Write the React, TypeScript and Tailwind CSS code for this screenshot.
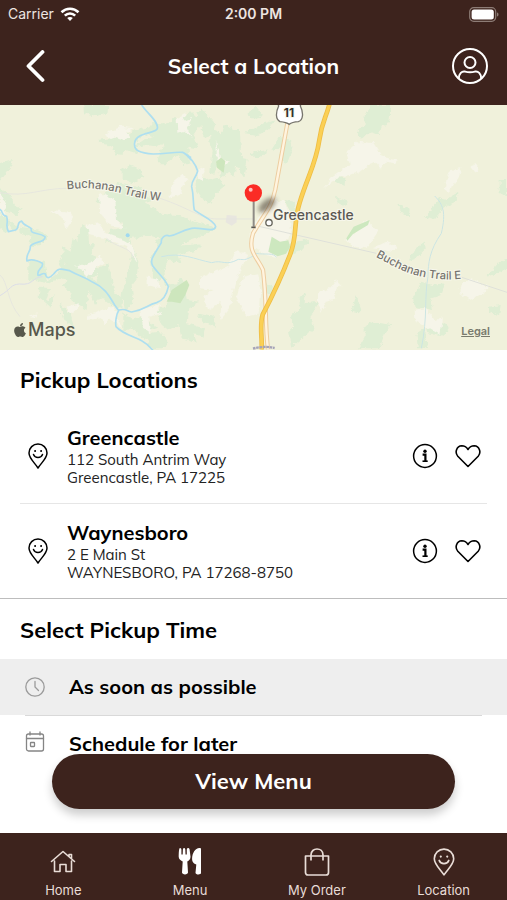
import type { ReactNode } from "react";
import { FaApple } from "react-icons/fa";

const locations = [
  { name: "Greencastle", street: "112 South Antrim Way", city: "Greencastle, PA 17225" },
  { name: "Waynesboro", street: "2 E Main St", city: "WAYNESBORO, PA 17268-8750" },
];

function SmilePin({ className }: { className: string }) {
  return (
    <svg viewBox="0 0 20 26" className={className} fill="none" stroke="currentColor" strokeWidth="1.5" strokeLinecap="round" strokeLinejoin="round" aria-hidden="true">
      <path d="M10 25C7 20 1 15.500 1 10a9 9 0 0 1 18 0c0 5.500-6 10-9 15Z" />
      <path d="M5.500 11.500c1.500 4 7.500 4 9 0" />
      <circle cx="7" cy="8" r=".5" fill="currentColor" strokeWidth="1" />
      <circle cx="13" cy="8" r=".5" fill="currentColor" strokeWidth="1" />
    </svg>
  );
}

function InfoIcon() {
  return (
    <svg viewBox="0 0 26 26" className="size-[26px]" fill="none" stroke="currentColor" aria-hidden="true">
      <circle cx="13" cy="13" r="11.400" strokeWidth="1.500" />
      <circle cx="13" cy="8.300" r="1.700" fill="currentColor" stroke="none" />
      <path d="M10.600 11.700h2.800v6.300" strokeWidth="2.200" />
      <path d="M10.500 18.200h5.200" strokeWidth="1.600" />
    </svg>
  );
}

function HeartIcon() {
  return (
    <svg viewBox="0 0 26 24" className="h-6 w-[26px]" fill="none" stroke="currentColor" strokeWidth="1.600" strokeLinejoin="round" aria-hidden="true">
      <path d="M13 22.500 2.800 12.200C-.5 8.400 1.500 2 6.800 1.800c3 0 4.600 1.200 6.200 3.700 1.600-2.500 3.200-3.700 6.200-3.700 5.300.2 7.300 6.600 4 10.400Z" />
    </svg>
  );
}

function StatusBar() {
  return (
    <div className="grid h-7 grid-cols-3 items-center px-2 font-['Inter','Liberation_Sans',sans-serif] text-sm text-[#eee5e1]">
      <div className="flex items-center gap-1.5">
        <span>Carrier</span>
        <svg viewBox="0 0 20 14" className="h-[14px] w-5" fill="none" stroke="#fff" strokeWidth="2.600" aria-hidden="true">
          <path d="M1.500 5.200c4.800-4.600 12.200-4.600 17 0M4.800 8.600c3-2.900 7.400-2.900 10.400 0" />
          <path d="m10 14-2.800-3c1.600-1.500 4-1.500 5.600 0Z" fill="#fff" stroke="none" />
        </svg>
      </div>
      <span className="text-center font-semibold">2:00 PM</span>
      <svg viewBox="0 0 30 15" className="h-[15px] w-[30px] justify-self-end" aria-hidden="true">
        <rect x=".7" y=".7" width="26" height="13.600" rx="4" fill="none" stroke="#8d7c76" strokeWidth="1.200" />
        <rect x="2.600" y="2.500" width="22.200" height="10" rx="2.500" fill="#fff" />
        <path d="M28 5.500c2 .5 2 3.500 0 4Z" fill="#8d7c76" />
      </svg>
    </div>
  );
}

function Header() {
  return (
    <header className="shrink-0 bg-[#3d231d] text-white">
      <StatusBar />
      <div className="grid h-[77px] grid-cols-[40px_1fr_40px] items-center px-[18px]">
        <button type="button" aria-label="Back" className="flex h-10 items-center pl-1.5">
          <svg viewBox="0 0 22 34" className="h-[34px] w-[22px]" fill="none" stroke="currentColor" strokeWidth="3.800" strokeLinecap="round" strokeLinejoin="round" aria-hidden="true">
            <path d="M18.500 2 4.500 16l14 14" />
          </svg>
        </button>
        <h1 className="text-center text-[21px] font-bold">Select a Location</h1>
        <button type="button" aria-label="Account" className="flex h-10 items-center justify-end">
          <svg viewBox="0 0 38 38" className="size-[38px]" fill="none" stroke="currentColor" strokeWidth="2" aria-hidden="true">
            <circle cx="19" cy="18" r="17" />
            <circle cx="19" cy="14.500" r="5.500" />
            <path d="M7.800 30.500c.2-5 3-7.600 6.300-6.900 3.800 1 6 1 9.800 0 3.300-.7 6.100 1.900 6.300 6.900" />
          </svg>
        </button>
      </div>
    </header>
  );
}

function LocationMap() {
  return (
    <div className="relative shrink-0 font-['Inter','Liberation_Sans',sans-serif]">
      <svg viewBox="0 0 507 245" className="block w-full bg-[#f0f1db]" role="img" aria-label="Map of Greencastle">
        <defs>
          <filter id="pinShadow" x="-50%" y="-50%" width="200%" height="200%"><feGaussianBlur stdDeviation="8" /></filter>
          <filter id="terrain" x="-5%" y="-5%" width="110%" height="110%">
            <feTurbulence type="fractalNoise" baseFrequency=".07" numOctaves="3" seed="4" />
            <feDisplacementMap in="SourceGraphic" scale="16" xChannelSelector="R" yChannelSelector="G" />
            <feGaussianBlur stdDeviation="1.600" />
          </filter>
          <path id="trailWest" d="M201 268C260 262 300 266 345 275S420 299 500 303" />
          <path id="trailEast" d="M368 470C420 497 460 525 530 534S600 536 650 536" />
        </defs>

        <g transform="translate(0 -5) scale(.33333)">
          <g fill="#dfeed4" filter="url(#terrain)">
            <path d="M250 15h75l-3 25-30 8-40-8ZM295 120l65-10 50-20 45-12-28 30-22 25 10 28-40-12-25 22-12-34-30-5ZM505 70l20-20 15 15 30-35 20 20 15-25 40 45-5 30-25 15-15-40-20 30 15 40-30-5 5 50-20 5-15-30-25 15-18 20-20-20 20-50-20 10-35-5-40 10 35-25 30-10-25-10 20-30ZM640 90l25 10 10-25 25 15h20l3 80 20 5-10 60-25-40-5 40-15-20-25 20-10-50-10 40-15-10 10-60-10-30ZM590 230l30 10 35-10 20 30-25 20-20 30-20-10-20-30Z" />
            <path d="M365 210l25-14 30 12 10 22-30 20-35-15ZM355 250l65 12 12 30 50 2-45 12 45 35 60 5 45 20 60 15-15 15-60 15-35 5-30-5-20 15-15-15-45-5-20 15-10-25-20 5-10-35-30-5-10-25-40-35ZM0 190l38-10-5 20-33 45ZM0 265l30 20 15 30 20 10-15 20-30-10-20 5ZM0 340l30 20 25 22-10 15-15-25-12 25-18-12ZM245 375l20 10 2 50 15-5-5 35 35 15-30 10 20 25-25 20-10 35-45-50-25-30-10 20-10-30 15-20-5-20 25 15 5-40 15 5 5-25ZM330 390l60-10 20 25-20 10 5 20-50-12-30 5ZM60 380l60 10 22 20-20 25-35 5 5-30-30-10ZM85 480l50 5 5 60 45-35-10-25 60 25 50 30 20 50-20 25-20-45-5 60-45-25-5-30-25-15 20-20-25-5-30 15-65-10ZM120 560l30 5-12 40 28-20-15 35-35-30ZM300 500l25-10 10 45 12 50 20 5-3 35-45-20-35-40ZM400 440l15 45-5 50-15 20 5 55-25 20-10-45 20-75ZM485 410l90-10 60-15-10 15-55 20-30 20 65-10-10 20-60 15 10 25-40-10-30 70-15-15-10-65 25-25-10-20ZM470 500l20 5 10 45 25 5 20-20 10 30 5 35 40 5-35 20-5 45 55 15-5 25-30-10 10 25-45-10-10-40-30 15-25-20-10-40 30-15 15-30ZM180 610l30 30 15 45-35-25ZM370 640l30 20 25-15 20 20 30 15-30 10 10 20-20 10-40-35-25 10ZM440 700l40-5 25 30-15 20h-40ZM635 525l35-15 15 20-35 25ZM590 640l50 10 10 35-40-20Z" />
          </g>
          <g fill="#f6f5e9" filter="url(#terrain)">
            <path d="M318 100l45-20 38 5-20 12 8 15-30 10-8-12-20 8ZM530 55l30-15-10 25 30-12-20 30 15 30-25-20-18 5ZM650 120l10 55 30 10-20 15-20-30ZM508 295l10-50 32-25 12 20-20 25 5 15ZM296 275l50 25 5 60 25 25-40-5-35-40ZM262 375l35-5 20 30 55 20 25 15 15 50-35-45-60-25-50-10ZM228 500l50-15 20-20 15 20-25 20-30 30-5-25ZM200 620l40-10-5 20-25 10ZM265 645l50-15 20-10 20 15-5 20 20 30-45-30-10 20-12-20-40 5ZM420 630l60-15-10 20 20 5-45 10 5 50-20-15ZM150 330l60 5 12 20-25 35-10-40ZM600 530l85-30 25-50 35 15-25 45-20 60-10 50-30 40 5-55-40 25-15-40 30-20-40-5ZM0 275l20 40-8 20 15 25-27-25ZM440 530l30 5 10 30-40-10ZM90 650l20-10-5 15ZM590 230l12-30 15 5-12 35Z" />
          </g>
          <path d="M500 605l15-35 45-30 8 15-12 30-15 25-25-5ZM648 185l15-12 13 10-5 35-20-15Z" fill="#cde6bd" />
          <path d="m680 345 30 2v20l-15 10-18-10Z" fill="#e8e6df" />
          <path d="M0 278c80 15 120-13 200-13M480 295c90 30 120 60 170 62h112M0 525c25 20 20 80 60 125M320 415c30 30 75 25 80 60" fill="none" stroke="#e5e5de" strokeWidth="2.500" />
          <path d="M0 587c35-20 30-33 58-35 45 5 35-20 70-22" fill="none" stroke="#dcdde7" strokeWidth="3" />
          <g fill="none" stroke="#aedff0" strokeWidth="5" strokeLinejoin="round" strokeLinecap="round">
            <path d="M423 10C430 32 478 62 472 86C466 102 408 96 404 128C400 152 420 160 460 162C500 162 520 155 548 157C570 168 588 195 593 213C588 235 574 240 575 260C582 290 578 305 583 330C600 345 645 362 647 380C640 400 600 380 575 385C540 392 530 406 508 408C495 402 482 415 484 428C462 465 448 480 458 497C475 522 495 535 505 560C500 585 488 602 470 608C440 615 435 630 395 636C378 634 380 624 357 630C350 640 345 665 348 680C365 700 400 710 425 722C440 730 448 738 458 750" />
            <path d="M0 328c12 8 0 16 20 21 6 25-5 22 5 46l22-5c14-8 0-22 18-27 6 16 20 13 29 23-5 18 22 10 41 24 2 19-33 13-44 29 2 18-15 22-10 44 13-7 28-3 46 7 5 15-18 16-13 36 9 1 15-10 22-4 5 19 16 9 25 0 15-23 28-13 48-10 35 19 42 17 70 35 48 22 53 56 76 83" />
            <path d="M485 470c60-15 98 8 150 18 35-10 40 12 80-10 20 0 15 5 45-10" strokeWidth="3" stroke="#cae6e7" />
          </g>
          <path d="m548 155 26 15-2 12Z" fill="#aedff0" />
          <circle cx="383" cy="406" r="6" fill="#a1d9ef" />
        </g>

        <g transform="translate(253 -5) scale(.33333)">
          <g fill="#dfeed4" filter="url(#terrain)">
            <path d="M335 50l20-35h60l-7 55-20 5-10 30-30-10-20 20-18-20 25-20ZM-20 40l30-20 20 25-25 15ZM20 75l45-15-20 30-30 15-40-5ZM80 110l30 10 10 25-20 50-20-20 5-30-30 5ZM-10 160l60-12-40 30ZM290 165l20-15 20 10-10 15ZM250 230l28 5-4 22-25-12ZM250 290l35 15-10 15-25-15ZM432 310l38 18-2 22-20-10ZM535 330l25-40 15 10 38-22-2 25-40 20-25 35-30-8ZM740 240h22v50l-22-15ZM120 425l50-5-30 35-30 10-15-25ZM468 480l20-35 28-20 2 18-30 30ZM505 545l30 10 40-5-10 35-30 10 5 35-55-10-5-25ZM735 490l27-15v30l-20 10-40 15ZM708 620l35-5-5 35-30-15ZM295 635l15-50 15 45-8 10ZM140 590l18-10-3 30 40-5-20 50 10 30-35 25-35 30-10-45 20-20-15-25 30-25ZM335 680l25-15 55 10-20 25-15 45h-65l20-35ZM520 660l40 5 30 15-20 30-45-10ZM95 300l30 5 5 40-20-10ZM40 550l20 5-5 30-15-10ZM490 700l25-15 10 60h-30Z" />
          </g>
          <g fill="#f6f5e9" filter="url(#terrain)">
            <path d="M210 265l30-35 50-35-10-40 35-30 50 5 25 40 45 12-10 8-25-5-15 20-20-22-50 35-60 15ZM580 240l15-30 30-5-8 25-30 48-12-10ZM650 200l20-8 10 15-15 15ZM280 420l60-60 35 35-35 50-40-5ZM360 445l40-20 35 15-20 15ZM-10 390l45-65 20-30 40 10 20 60-5 50-40 55-30-5-35-20-15-10ZM195 580l35-15 20-25 15 15-20 20 5 20-30 10-15 30-10-30ZM485 630l30-5 30 35 25-5-8 50-50-30-25-15ZM620 560l35-25 50 25-10 20-45 20-30-20ZM-30 530l45-10 10 50-5 70-40 10-30-60Z" />
          </g>
          <path d="m46 455 10-45 25 15 25-4 5 20-12 20-25 8ZM280 415l22-35 48-20-5 15-45 27-17 20Z" fill="#cde8bf" />
          <path d="m0 375 130 30 240 55M620 530l142 47" fill="none" stroke="#dfe1da" strokeWidth="3" />
          <path d="M545 288c25 25 35 48 20 112-35 50-40 90-40 130-12 60 0 120-20 215M8 460c30 5 55-3 62 12" fill="none" stroke="#cce5e3" strokeWidth="3" />
          <path d="M104 65 67 268C55 326 35 339 0 400c-17 56 12 70 30 110 12 95 5 160 15 238" fill="none" stroke="#edcda0" strokeWidth="13" />
          <path d="M104 65 67 268C55 326 35 339 0 400c-17 56 12 70 30 110 12 95 5 160 15 238" fill="none" stroke="#fff4df" strokeWidth="7" />
          <path d="M230 10c-12 48-22 50-31 110-10 72-37 113-59 188-20 65-6 97-28 154-27 70-55 129-83 182-10 35-1 65-3 104" fill="none" stroke="#eebd45" strokeWidth="14" />
          <path d="M230 10c-12 48-22 50-31 110-10 72-37 113-59 188-20 65-6 97-28 154-27 70-55 129-83 182-10 35-1 65-3 104" fill="none" stroke="#fbd055" strokeWidth="9" />
          <path d="M73 6h72l-3 12c10 20 9 42-6 47-13 1-21 3-27 8-7-5-16-7-28-8-14-7-13-28-4-47Z" fill="#fff" stroke="#77756d" strokeWidth="4" />
          <path d="M0 746c20-6 45-7 65-2" stroke="#a5a3b8" strokeWidth="7" fill="none" strokeDasharray="8 2" />
          <ellipse cx="42" cy="315" rx="31" ry="15" fill="#4d4336" opacity=".6" transform="rotate(-38 42 315)" filter="url(#pinShadow)" />
          <path d="M2 300v80" stroke="#8e8b85" strokeWidth="6" />
          <path d="M-5 382h13" stroke="#5b5750" strokeWidth="5" />
          <circle cx="1" cy="279" r="26" fill="#fb2c25" />
          <circle cx="-7" cy="269" r="6" fill="#ffc1bd" />
          <circle cx="48" cy="368" r="9.500" fill="#fff" stroke="#65645b" strokeWidth="4" />
        </g>

        <g fill="#76746f" stroke="#f7f7eb" strokeWidth="2" paintOrder="stroke" fontSize="14">
          <text x="289" y="12" textAnchor="middle" fontWeight="700" fontSize="12" fill="#33322f">11</text>
          <text x="273" y="115" fontWeight="500" fill="#5a5853">Greencastle</text>
          <g fontSize="34" fontWeight="500" strokeWidth="6">
            <g transform="translate(0 -5) scale(.33333)"><text><textPath href="#trailWest">Buchanan Trail W</textPath></text></g>
            <g transform="translate(253 -5) scale(.33333)"><text><textPath href="#trailEast">Buchanan Trail E</textPath></text></g>
          </g>
        </g>
      </svg>
      <div className="absolute bottom-2 left-3 flex items-center text-lg leading-6 font-medium text-[#57584c]">
        <FaApple className="size-4" aria-hidden="true" />
        <span>Maps</span>
      </div>
      <a href="#legal" className="absolute right-[17px] bottom-3 text-[11px] leading-[14px] font-semibold text-[#797b6d] underline">Legal</a>
    </div>
  );
}

function PickupLocations() {
  return (
    <section className="border-b border-[#bdbdbd]">
      <h2 className="px-5 pt-[15px] pb-3.5 text-[22px] leading-[30px] font-bold">Pickup Locations</h2>
      <ul className="mx-5 divide-y divide-[#e6e6e6]">
        {locations.map((place) => (
          <li key={place.name} className="flex items-center py-4">
            <SmilePin className="mx-2 h-[26px] w-5 shrink-0" />
            <div className="min-w-0 flex-1 pl-[11px]">
              <h3 className="text-xl leading-[26px] font-bold">{place.name}</h3>
              <address className="text-[15px] leading-[18px] text-[#222] not-italic">
                {place.street}
                <br />
                {place.city}
              </address>
            </div>
            <div className="flex items-center gap-[17px] pr-1.5">
              <button type="button" aria-label={`About ${place.name}`}><InfoIcon /></button>
              <button type="button" aria-label={`Save ${place.name}`}><HeartIcon /></button>
            </div>
          </li>
        ))}
      </ul>
    </section>
  );
}

function PickupTime() {
  return (
    <section>
      <h2 className="px-5 pt-4 pb-3.5 text-[22px] leading-[30px] font-bold">Select Pickup Time</h2>
      <button type="button" className="flex h-14 w-full items-center gap-6 bg-[#eee] px-[25px] text-left text-xl font-bold">
        <svg viewBox="0 0 20 20" className="size-5" fill="none" stroke="#9b9b9b" strokeWidth="1.300" strokeLinecap="round" aria-hidden="true">
          <circle cx="10" cy="10" r="9.200" />
          <path d="M10 4.500V10l3.500 3.500" />
        </svg>
        As soon as possible
      </button>
      <div className="mx-[25px] border-t border-[#d9d9d9]" />
      <button type="button" className="flex h-14 w-full items-center gap-6 px-[25px] text-left text-xl font-bold">
        <svg viewBox="0 0 20 26" className="h-[26px] w-5" fill="none" stroke="#858585" strokeWidth="1.300" strokeLinecap="round" aria-hidden="true">
          <rect x="1.500" y="3" width="17" height="17" rx="2" />
          <path d="M1.500 7.500h17M5 1v3M15 1v3" />
          <rect x="5.500" y="11.500" width="4" height="4" rx=".5" />
        </svg>
        Schedule for later
      </button>
    </section>
  );
}

function Tab({ label, active, children }: { label: string; active?: boolean; children: ReactNode }) {
  return (
    <a href={`#${label.toLowerCase().replace(" ", "-")}`} aria-current={active ? "page" : undefined} className="flex flex-col items-center pt-[13px]">
      <span className="flex h-8 items-center">{children}</span>
      <span className="text-[13px] leading-6">{label}</span>
    </a>
  );
}

function TabBar() {
  return (
    <nav className="grid h-[67px] shrink-0 grid-cols-4 bg-[#3d231d] font-['Inter','Liberation_Sans',sans-serif] text-[#e9ddd7]">
      <Tab label="Home">
        <svg viewBox="0 0 26 24" className="h-6 w-[26px]" fill="none" stroke="currentColor" strokeWidth="1.600" strokeLinejoin="round" strokeLinecap="round" aria-hidden="true">
          <path d="M4.500 11v10.500H10v-7h6v7h5.500V11M1.500 11.500 13 1.500l11.500 10M19 6.500v-2h2.500v4" />
        </svg>
      </Tab>
      <Tab label="Menu" active>
        <svg viewBox="0 0 24 28" className="h-7 w-6 text-white" fill="currentColor" aria-hidden="true">
          <path d="M2 0c1 0 1.400.7 1.400 1.800v4.800h1.300l.2-5.200c.1-1.900 2.300-1.900 2.400 0l.2 5.200h1.300V1.800c0-2.400 2.600-2.400 2.800-.2l.9 6.800c.2 3-1.500 4.200-3.200 5.200l.7 11c0 2.400-6 2.400-6 0l.7-11C3 12.600.5 11.400.7 8.400c.1-2.800.1-8.400 1.300-8.400ZM23 1v24c0 2-5.500 2-5.500-.3l.8-8.200c-3.700-1.400-4.300-4-4.200-6.300C14.300 5.500 17 0 21.500 0c1 0 1.500.2 1.500 1Z" />
        </svg>
      </Tab>
      <Tab label="My Order">
        <svg viewBox="0 0 26 28" className="h-7 w-[26px]" fill="none" stroke="currentColor" strokeWidth="1.700" strokeLinejoin="round" aria-hidden="true">
          <path d="M1.500 8h23v16.500c0 1.500-1 2.500-2.500 2.500H4c-1.500 0-2.500-1-2.500-2.500ZM7 12.500V7c0-8 12-8 12 0v5.500" />
        </svg>
      </Tab>
      <Tab label="Location"><SmilePin className="h-7 w-[22px]" /></Tab>
    </nav>
  );
}

export default function App() {
  return (
    <div className="flex h-screen flex-col bg-white font-[Muli,Mulish,Lato,sans-serif] text-black">
      <Header />
      <main className="relative flex min-h-0 flex-1 flex-col">
        <div className="min-h-0 flex-1 overflow-x-hidden overflow-y-auto">
          <LocationMap />
          <PickupLocations />
          <PickupTime />
        </div>
        <button type="button" className="absolute inset-x-[52px] bottom-6 h-[55px] rounded-full bg-[#3d231d] text-[22px] font-bold text-white shadow-[0_6px_10px_rgba(0,0,0,0.2)]">View Menu</button>
      </main>
      <TabBar />
    </div>
  );
}
